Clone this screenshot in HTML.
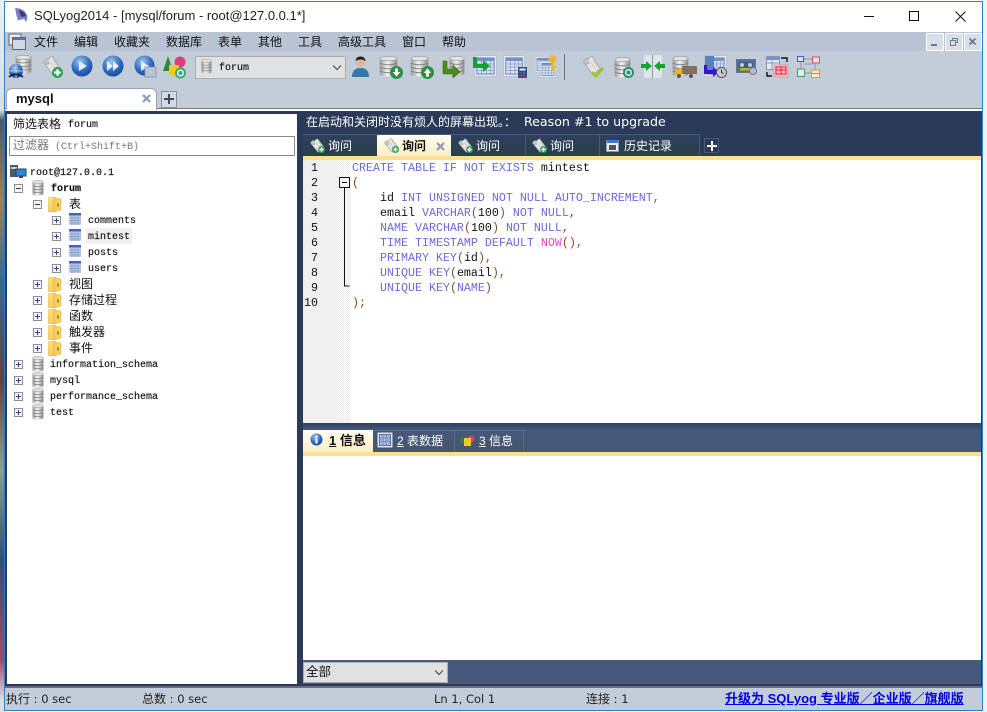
<!DOCTYPE html>
<html><head><meta charset="utf-8"><style>
html,body{margin:0;padding:0;background:#fff}
body{width:987px;height:712px;position:relative;overflow:hidden;font-family:"Liberation Sans","WenQuanYi Zen Hei","Noto Sans CJK SC",sans-serif;font-size:12px;color:#111}
.a{position:absolute}
.t{position:absolute;white-space:pre;line-height:16px}
.m{font-family:"Liberation Mono","WenQuanYi Zen Hei","Noto Sans CJK SC",monospace;font-size:10px;margin-top:2px;-webkit-text-stroke:.15px #111}
.d{font-family:"DejaVu Sans",sans-serif;font-size:11.5px;color:#222}
.c{font-family:"WenQuanYi Zen Hei","Noto Sans CJK SC",sans-serif;font-size:12px}
svg{position:absolute;overflow:visible}
.code{font-family:"Liberation Mono",monospace;font-size:11.67px;line-height:15px;white-space:pre;position:absolute}
.k{color:#6a6ad8}.p{color:#8a4a20}.f{color:#f040c0}
.ln{position:absolute;left:304px;width:14px;text-align:right;font-family:"Liberation Mono",monospace;font-size:11.67px;line-height:15px}
</style></head><body>
<svg width="0" height="0" style="position:absolute"><defs>
<linearGradient id="gdb" x1="0" x2="1" y1="0" y2="0"><stop offset="0" stop-color="#9a9a9a"/><stop offset=".45" stop-color="#f4f4f4"/><stop offset="1" stop-color="#8a8a8a"/></linearGradient>
<radialGradient id="gbl" cx=".4" cy=".3" r=".8"><stop offset="0" stop-color="#9fc6ee"/><stop offset=".55" stop-color="#2f6cc0"/><stop offset="1" stop-color="#12408e"/></radialGradient>
<linearGradient id="gf" x1="0" x2="1" y1="0" y2="1"><stop offset="0" stop-color="#ffe98a"/><stop offset="1" stop-color="#efbe4a"/></linearGradient>
<symbol id="db" viewBox="0 0 12 16" preserveAspectRatio="none" overflow="visible"><rect x="0.5" y="2" width="11" height="12" fill="url(#gdb)"/><ellipse cx="6" cy="14" rx="5.500" ry="1.600" fill="url(#gdb)"/><ellipse cx="6" cy="2" rx="5.500" ry="1.700" fill="#e2e2e2" stroke="#999" stroke-width=".5"/><path d="M.5 5.500q5.500 2.500 11 0M.5 8.500q5.500 2.500 11 0M.5 11.500q5.500 2.500 11 0" stroke="#808080" fill="none" stroke-width=".7"/></symbol>
<symbol id="fo" viewBox="0 0 14 16" preserveAspectRatio="none"><path d="M0 2l6-1 2 1 1 13-7 1H0z" fill="url(#gf)" stroke="#d8ac48" stroke-width=".5"/><path d="M6 2l7 1v11l-7 2z" fill="#f9cf5c" stroke="#d8ac48" stroke-width=".5"/><path d="M9 7l2 1v3l-2-1z" fill="#a88a28"/></symbol>
<symbol id="tb" viewBox="0 0 12 12"><rect width="12" height="12" fill="#c5d3ea"/><rect width="12" height="2.500" fill="#3f66ae"/><path d="M0 5h12M0 7.500h12M0 10h12M3 2v10M6 2v10M9 2v10" stroke="#7d97c8" stroke-width=".8"/></symbol>
<symbol id="scr" viewBox="0 0 20 22" preserveAspectRatio="none"><path d="M1 8L10 1l9 13-8 7z" fill="#e6e6e3" stroke="#9a9a9a" stroke-width=".8"/><path d="M1 8c-1-3 3-5 5-4-1 2 0 4 1 5-3 1-5 1-6-1z" fill="#c4c4c4" stroke="#999" stroke-width=".6"/><path d="M8 7l6 8M11 5l5 8" stroke="#c0c0c0" stroke-width=".8"/></symbol>
<symbol id="bx" viewBox="0 0 9 9"><rect x=".5" y=".5" width="8" height="8" fill="#f4f4f4" stroke="#8d8d8d"/><path d="M2 4.500h5M4.500 2v5" stroke="#2c4a94" stroke-width="1"/></symbol>
<symbol id="mx" viewBox="0 0 9 9"><rect x=".5" y=".5" width="8" height="8" fill="#f4f4f4" stroke="#8d8d8d"/><path d="M2 4.500h5" stroke="#333" stroke-width="1"/></symbol>
<symbol id="gp" viewBox="0 0 10 10"><circle cx="5" cy="5" r="5" fill="#2fa05a"/><path d="M5 2v6M2 5h6" stroke="#fff" stroke-width="2"/></symbol>
<symbol id="grid" viewBox="0 0 24 22" preserveAspectRatio="none"><rect x=".5" y=".5" width="23" height="21" fill="#e6ebf3" stroke="#b8c2d0"/><rect x="3" y="3" width="18" height="16" fill="#dbe4f2" stroke="#5b7db5"/><rect x="3" y="3" width="18" height="3" fill="#6f92c8"/><path d="M3 9h18M3 12h18M3 15.500h18M8 3v16M13 3v16M17 3v16" stroke="#7d97c8" stroke-width=".8"/></symbol>
</defs></svg>

<!-- desktop edges -->
<div class="a" style="left:0;top:0;width:5px;height:712px;background:linear-gradient(#eee 0,#ddd 110px,#4a5a6a 120px,#a08050 200px,#3a6a8a 280px,#604040 380px,#8aa090 470px,#30506a 560px,#a04a70 660px,#ddd 700px)"></div>
<div class="a" style="left:983px;top:0;width:4px;height:712px;background:#f2f2f2"></div>
<!-- window -->
<div class="a" style="left:4px;top:1px;width:979px;height:710px;background:#fff;border:1px solid #2a80c8;box-sizing:border-box"></div>

<!-- title -->
<svg style="left:14px;top:7px" width="16" height="16" viewBox="0 0 16 16"><path d="M1 1c5 0 10 2 12 7 1 3 0 5-1 7l-2-3-5 1-1 1-1-4C2 8 2 4 1 1z" fill="#7f7fc8"/><path d="M5 3c4 1 6 3 7 6l-4 1C6 8 5 5 5 3z" fill="#3a3a78"/></svg>
<div class="t" style="left:34px;top:8px;font-size:13px;color:#222">SQLyog2014 - [mysql/forum - root@127.0.0.1*]</div>
<div class="a" style="left:864px;top:16px;width:10px;height:1px;background:#111"></div>
<div class="a" style="left:909px;top:11px;width:8px;height:8px;border:1px solid #111"></div>
<svg style="left:955px;top:11px" width="11" height="11"><path d="M.5.5l10 10M10.500.5l-10 10" stroke="#111" fill="none"/></svg>

<!-- menu -->
<div class="a" style="left:5px;top:32px;width:977px;height:19px;background:#b8c3d3"></div>
<svg style="left:9px;top:34px" width="17" height="16"><rect x="0" y="0" width="12" height="11" fill="#e8ecf2" stroke="#667"/><rect x="3.500" y="3.500" width="13" height="12" fill="#cfd8e6" stroke="#667"/><rect x="4" y="4" width="12" height="2" fill="#5577aa"/></svg>
<div class="t" style="left:34px;top:34px">文件</div>
<div class="t" style="left:74px;top:34px">编辑</div>
<div class="t" style="left:114px;top:34px">收藏夹</div>
<div class="t" style="left:166px;top:34px">数据库</div>
<div class="t" style="left:218px;top:34px">表单</div>
<div class="t" style="left:258px;top:34px">其他</div>
<div class="t" style="left:298px;top:34px">工具</div>
<div class="t" style="left:338px;top:34px">高级工具</div>
<div class="t" style="left:402px;top:34px">窗口</div>
<div class="t" style="left:442px;top:34px">帮助</div>
<div class="a" style="left:926px;top:33px;width:16px;height:16px;background:#d8dfe8;border:1px solid #fff"></div>
<div class="a" style="left:945px;top:33px;width:16px;height:16px;background:#d8dfe8;border:1px solid #fff"></div>
<div class="a" style="left:964px;top:33px;width:16px;height:16px;background:#d8dfe8;border:1px solid #fff"></div>
<div class="a" style="left:931px;top:44px;width:6px;height:2px;background:#6a7a90"></div>
<svg style="left:950px;top:38px" width="8" height="8"><path d="M2.500 2.500v-2h5v4h-2M.5 2.500h5v5h-5z" fill="none" stroke="#6a7a90"/></svg>
<svg style="left:969px;top:38px" width="7" height="7"><path d="M.5.5l6 6M6.500.5l-6 6" stroke="#6a7a90" stroke-width="1.800"/></svg>

<!-- toolbar -->
<div class="a" style="left:5px;top:51px;width:977px;height:57px;background:#c3cdd9"></div>
<!-- 1 connect -->
<svg style="left:15px;top:55px;width:17px;height:19px"><use href="#db" width="17" height="19"/></svg>
<svg style="left:8px;top:63px" width="16" height="16"><circle cx="8" cy="8" r="7" fill="url(#gbl)"/><path d="M8 1v14M1 8h14" stroke="#cfe0f5" stroke-width=".8"/><path d="M1 14c3-3 9-4 14 0" stroke="#111" stroke-width="1.500" fill="none"/></svg>
<!-- 2 -->
<svg style="left:43px;top:55px;width:18px;height:21px"><use href="#scr" width="18" height="21"/></svg>
<svg style="left:52px;top:67px;width:11px;height:11px"><use href="#gp" width="11" height="11"/></svg>
<!-- 3,4,5 -->
<svg style="left:71px;top:55px" width="22" height="22"><circle cx="11" cy="11" r="10.500" fill="url(#gbl)"/><path d="M8 6l8 5-8 5z" fill="#e6eefa"/></svg>
<svg style="left:102px;top:55px" width="22" height="22"><circle cx="11" cy="11" r="10.500" fill="url(#gbl)"/><path d="M5 6l6 5-6 5zM11 6l6 5-6 5z" fill="#e6eefa"/></svg>
<svg style="left:134px;top:55px" width="22" height="22"><circle cx="10.500" cy="10.500" r="10" fill="url(#gbl)"/><path d="M7 6l8 5-8 5z" fill="#e6eefa"/><rect x="11" y="12" width="11" height="10" fill="#b8c4d8" stroke="#8494ae" stroke-width=".8"/></svg>
<!-- 6 -->
<svg style="left:163px;top:56px" width="24" height="23"><path d="M0 15l5-15 5 15z" fill="#2c8a3a"/><circle cx="17" cy="6" r="5.500" fill="#d8407a"/><rect x="6" y="9" width="10" height="10" fill="#f0cc20"/><circle cx="17.500" cy="17" r="5.500" fill="#3aa878"/><circle cx="17.500" cy="17" r="2.800" fill="none" stroke="#fff" stroke-width="1.300"/></svg>
<!-- combo -->
<div class="a" style="left:195px;top:56px;width:149px;height:21px;background:#e1e1e1;border:1px solid #adadad"></div>
<svg style="left:201px;top:59px;width:11px;height:15px"><use href="#db" width="11" height="15"/></svg>
<div class="t m" style="left:219px;top:59px">forum</div>
<svg style="left:332px;top:65px" width="10" height="6"><path d="M1 .5l4 4 4-4" stroke="#444" fill="none" stroke-width="1.100"/></svg>
<!-- 7 person -->
<svg style="left:352px;top:56px" width="17" height="22"><circle cx="8.500" cy="6" r="5" fill="#d9b89c"/><path d="M3.500 5c0-6 10-6 10 0-3-2-7-2-10 0z" fill="#222"/><path d="M0 21c0-7 4-9 8.500-9s8.500 2 8.500 9z" fill="#3478a8"/></svg>
<!-- 8 -->
<svg style="left:379px;top:56px;width:19px;height:21px"><use href="#db" width="19" height="21"/></svg>
<svg style="left:390px;top:66px" width="13" height="13" viewBox="0 0 14 14"><circle cx="7" cy="7" r="7" fill="#2f8d46"/><path d="M5.500 2.500h3v4h2.500L7 11.500 3 6.500h2.500z" fill="#fff"/></svg>
<!-- 9 -->
<svg style="left:410px;top:56px;width:19px;height:21px"><use href="#db" width="19" height="21"/></svg>
<svg style="left:421px;top:66px" width="13" height="13" viewBox="0 0 14 14"><circle cx="7" cy="7" r="7" fill="#2f8d46"/><path d="M5.500 11.500h3v-4h2.500L7 2.500 3 7.500h2.500z" fill="#fff"/></svg>
<!-- 10 -->
<svg style="left:449px;top:56px;width:16px;height:20px"><use href="#db" width="16" height="20"/></svg>
<svg style="left:441px;top:60px" width="20" height="19"><path d="M2 1h4v8h6V5l7 7-7 6v-4H2z" fill="#4f8a20" stroke="#3a6a16" stroke-width=".6"/></svg>
<!-- 11 -->
<svg style="left:474px;top:55px;width:23px;height:22px"><use href="#grid" width="23" height="22"/></svg>
<svg style="left:472px;top:57px" width="20" height="17"><path d="M1 0h4v7h6V3l7 6-7 6v-4H1z" fill="#14a02c"/></svg>
<!-- 12 -->
<svg style="left:503px;top:55px;width:22px;height:22px"><use href="#grid" width="22" height="22"/></svg>
<svg style="left:518px;top:67px" width="9" height="11"><rect width="9" height="11" fill="#2f4f90"/><rect x="1.500" y="1.500" width="6" height="2" fill="#cfe"/><path d="M2 6h1M5 6h2M2 9h1M5 9h2" stroke="#e04050" stroke-width="1.200"/></svg>
<!-- 13 -->
<svg style="left:535px;top:56px;width:16px;height:17px"><use href="#grid" width="16" height="17"/></svg>
<svg style="left:540px;top:61px;width:16px;height:17px"><use href="#grid" width="16" height="17"/></svg>
<svg style="left:547px;top:55px" width="11" height="17"><circle cx="5.500" cy="4" r="4" fill="#eab838"/><rect x="4" y="6" width="3.500" height="10" fill="#eab838"/><rect x="7" y="11" width="2.500" height="2" fill="#eab838"/></svg>
<div class="a" style="left:564px;top:54px;width:1px;height:26px;background:#6a6f78"></div>
<!-- 14 -->
<svg style="left:583px;top:55px;width:18px;height:21px"><use href="#scr" width="18" height="21"/></svg>
<svg style="left:591px;top:66px" width="13" height="12"><path d="M1 6l4 4 7-8" stroke="#9ac828" stroke-width="3" fill="none"/></svg>
<!-- 15 -->
<svg style="left:614px;top:57px;width:17px;height:21px"><use href="#db" width="17" height="21"/></svg>
<svg style="left:623px;top:67px" width="11" height="11"><circle cx="5.500" cy="5.500" r="5.500" fill="#2a9070"/><circle cx="5.500" cy="5.500" r="2.800" fill="none" stroke="#e8f4f0" stroke-width="1.300"/></svg>
<!-- 16 -->
<div class="a" style="left:644px;top:55px;width:18px;height:23px;background:#dfe5ea"></div>
<div class="a" style="left:652px;top:55px;width:1px;height:23px;background:#8a97a6"></div>
<svg style="left:641px;top:60px" width="24" height="12"><path d="M0 4h5V1l6 5-6 5V8H0zM24 4h-5V1l-6 5 6 5V8h5z" fill="#10a828"/></svg>
<!-- 17 -->
<svg style="left:672px;top:56px;width:17px;height:21px"><use href="#db" width="17" height="21"/></svg>
<svg style="left:675px;top:66px" width="22" height="12"><rect x="7" y="0" width="15" height="8" fill="#84705c"/><path d="M0 3h7v6H0z" fill="#e6b820"/><circle cx="4" cy="10" r="2" fill="#555"/><circle cx="16" cy="10" r="2" fill="#555"/></svg>
<!-- 18 -->
<svg style="left:704px;top:55px;width:23px;height:22px"><use href="#grid" width="23" height="22"/></svg>
<div class="a" style="left:705px;top:56px;width:9px;height:14px;background:#5a80c0"></div>
<svg style="left:703px;top:65px" width="16" height="12"><path d="M1 0h3v5h6V2l6 5-6 5V9H1z" fill="#3a10d8"/></svg>
<svg style="left:716px;top:67px" width="11" height="11"><circle cx="5.500" cy="5.500" r="5" fill="#c8ccd2" stroke="#555"/><path d="M5.500 2.500v3l2 1" stroke="#333" fill="none"/></svg>
<!-- 19 -->
<svg style="left:736px;top:59px" width="21" height="16"><rect x=".5" y=".5" width="19" height="13" fill="#50709e" stroke="#68758a"/><rect x="3" y="3" width="14" height="6" fill="#3a5a90"/><circle cx="6" cy="6" r="2" fill="#c8ccd2"/><circle cx="14" cy="6" r="2" fill="#c8ccd2"/><rect x="4" y="9" width="11" height="2.500" fill="#d4a820"/><circle cx="17" cy="12" r="3.500" fill="#bbc" stroke="#778"/></svg>
<!-- 20 -->
<svg style="left:766px;top:56px" width="23" height="22"><rect x=".5" y=".5" width="13" height="13" fill="#e8edf5" stroke="#7d97c8"/><rect x="1" y="1" width="12" height="3" fill="#6f92c8"/><path d="M1 7h12M6 1v12" stroke="#7d97c8"/><path d="M15 2h6v4M1 16v4h5" stroke="#111" fill="none" stroke-width="1.400"/><rect x="8" y="9" width="14" height="12" fill="#f4c0c4" stroke="#d8a0a4"/><path d="M10 11h10v7H10zM15 11v7M10 14h10" stroke="#f01830" fill="none" stroke-width="1"/></svg>
<!-- 21 -->
<svg style="left:797px;top:56px" width="23" height="22"><rect x=".5" y=".5" width="6" height="5" fill="#dfe4f4" stroke="#4a50d0"/><rect x="15.500" y="1" width="7" height="6" fill="#f0dcdc" stroke="#d05060"/><rect x=".5" y="13" width="7" height="7.500" fill="#dff0e4" stroke="#40a060"/><rect x="14.500" y="14" width="8" height="7.500" fill="#f8ecd0" stroke="#e09830"/><path d="M14.500 17.500h8M7 3h8M4 6v7M18 7v7M7 17h7M7 8h8" stroke="#8a96a4" fill="none"/></svg>

<!-- tab strip -->
<div class="a" style="left:6px;top:88px;width:149px;height:21px;background:#fff;border:1px solid #9aa4b2;border-bottom:0;border-radius:6px 6px 0 0;z-index:2"></div>
<div class="t" style="left:16px;top:91px;font-weight:bold;font-size:13px;z-index:3">mysql</div>
<svg style="left:142px;top:94px;z-index:3" width="9" height="9"><path d="M1 1l7 7M8 1L1 8" stroke="#8a9bb4" stroke-width="2.200"/></svg>
<div class="a" style="left:161px;top:91px;width:14px;height:15px;background:#d4dae4;border:1px solid #8a8f98"></div>
<svg style="left:164px;top:94px" width="10" height="10"><path d="M5 0v10M0 5h10" stroke="#3a4a60" stroke-width="2"/></svg>
<div class="a" style="left:5px;top:108px;width:977px;height:1px;background:#77787c"></div>
<div class="a" style="left:5px;top:109px;width:977px;height:2px;background:#fff"></div>

<!-- main dark area -->
<div class="a" style="left:5px;top:111px;width:977px;height:575px;background:#2a3a58"></div>

<!-- left panel -->
<div class="a" style="left:7px;top:114px;width:290px;height:570px;background:#fff"></div>
<div class="t" style="left:13px;top:116px">筛选表格</div>
<div class="t m" style="left:68px;top:116px">forum</div>
<div class="a" style="left:9px;top:136px;width:284px;height:18px;border:1px solid #8a8a8a;background:#fff"></div>
<div class="t" style="left:13px;top:137px;color:#777">过滤器<span style="font-family:'Liberation Mono',monospace;font-size:10px"> (Ctrl+Shift+B)</span></div>

<svg style="left:10px;top:165px" width="17" height="14"><rect x="0" y="0" width="8" height="12" fill="#4a5a6a"/><rect x="1" y="2" width="6" height="2" fill="#c8d0d8"/><rect x="6" y="4" width="10" height="7" fill="#2a8ad8" stroke="#345"/><rect x="9" y="11" width="4" height="2" fill="#345"/></svg>
<div class="t m" style="left:30px;top:164px">root@127.0.0.1</div>

<svg style="left:14px;top:184px;width:9px;height:9px"><use href="#mx" width="9" height="9"/></svg>
<svg style="left:32px;top:180px;width:12px;height:16px"><use href="#db" width="12" height="16"/></svg>
<div class="t m" style="left:51px;top:180px;font-weight:bold">forum</div>

<svg style="left:33px;top:200px;width:9px;height:9px"><use href="#mx" width="9" height="9"/></svg>
<svg style="left:48px;top:196px;width:14px;height:16px"><use href="#fo" width="14" height="16"/></svg>
<div class="t" style="left:69px;top:196px">表</div>

<svg style="left:52px;top:216px;width:9px;height:9px"><use href="#bx" width="9" height="9"/></svg>
<svg style="left:69px;top:213px;width:12px;height:12px"><use href="#tb" width="12" height="12"/></svg>
<div class="t m" style="left:88px;top:212px">comments</div>

<div class="a" style="left:86px;top:228px;width:46px;height:16px;background:#f0f0f0"></div>
<svg style="left:52px;top:232px;width:9px;height:9px"><use href="#bx" width="9" height="9"/></svg>
<svg style="left:69px;top:229px;width:12px;height:12px"><use href="#tb" width="12" height="12"/></svg>
<div class="t m" style="left:88px;top:228px">mintest</div>

<svg style="left:52px;top:248px;width:9px;height:9px"><use href="#bx" width="9" height="9"/></svg>
<svg style="left:69px;top:245px;width:12px;height:12px"><use href="#tb" width="12" height="12"/></svg>
<div class="t m" style="left:88px;top:244px">posts</div>

<svg style="left:52px;top:264px;width:9px;height:9px"><use href="#bx" width="9" height="9"/></svg>
<svg style="left:69px;top:261px;width:12px;height:12px"><use href="#tb" width="12" height="12"/></svg>
<div class="t m" style="left:88px;top:260px">users</div>

<svg style="left:33px;top:280px;width:9px;height:9px"><use href="#bx" width="9" height="9"/></svg>
<svg style="left:48px;top:276px;width:14px;height:16px"><use href="#fo" width="14" height="16"/></svg>
<div class="t" style="left:69px;top:276px">视图</div>

<svg style="left:33px;top:296px;width:9px;height:9px"><use href="#bx" width="9" height="9"/></svg>
<svg style="left:48px;top:292px;width:14px;height:16px"><use href="#fo" width="14" height="16"/></svg>
<div class="t" style="left:69px;top:292px">存储过程</div>

<svg style="left:33px;top:312px;width:9px;height:9px"><use href="#bx" width="9" height="9"/></svg>
<svg style="left:48px;top:308px;width:14px;height:16px"><use href="#fo" width="14" height="16"/></svg>
<div class="t" style="left:69px;top:308px">函数</div>

<svg style="left:33px;top:328px;width:9px;height:9px"><use href="#bx" width="9" height="9"/></svg>
<svg style="left:48px;top:324px;width:14px;height:16px"><use href="#fo" width="14" height="16"/></svg>
<div class="t" style="left:69px;top:324px">触发器</div>

<svg style="left:33px;top:344px;width:9px;height:9px"><use href="#bx" width="9" height="9"/></svg>
<svg style="left:48px;top:340px;width:14px;height:16px"><use href="#fo" width="14" height="16"/></svg>
<div class="t" style="left:69px;top:340px">事件</div>

<svg style="left:14px;top:360px;width:9px;height:9px"><use href="#bx" width="9" height="9"/></svg>
<svg style="left:32px;top:356px;width:12px;height:16px"><use href="#db" width="12" height="16"/></svg>
<div class="t m" style="left:50px;top:356px">information_schema</div>

<svg style="left:14px;top:376px;width:9px;height:9px"><use href="#bx" width="9" height="9"/></svg>
<svg style="left:32px;top:372px;width:12px;height:16px"><use href="#db" width="12" height="16"/></svg>
<div class="t m" style="left:50px;top:372px">mysql</div>

<svg style="left:14px;top:392px;width:9px;height:9px"><use href="#bx" width="9" height="9"/></svg>
<svg style="left:32px;top:388px;width:12px;height:16px"><use href="#db" width="12" height="16"/></svg>
<div class="t m" style="left:50px;top:388px">performance_schema</div>

<svg style="left:14px;top:408px;width:9px;height:9px"><use href="#bx" width="9" height="9"/></svg>
<svg style="left:32px;top:404px;width:12px;height:16px"><use href="#db" width="12" height="16"/></svg>
<div class="t m" style="left:50px;top:404px">test</div>

<!-- notice -->
<div class="t c" style="left:306px;top:114px;color:#fff">在启动和关闭时没有烦人的屏幕出现。：</div>
<div class="t" style="left:524px;top:114px;color:#fff;font-family:'DejaVu Sans',sans-serif;font-size:12.600px">Reason #1 to upgrade</div>

<!-- query tabs -->
<div class="a" style="left:303px;top:134px;width:397px;height:22px;background:linear-gradient(#2e4060,#2a3f4a)"></div>
<div class="a" style="left:377px;top:134px;width:74px;height:22px;background:linear-gradient(#fffdf4,#fdeec4)"></div>
<div class="a" style="left:525px;top:134px;width:1px;height:22px;background:#4a5a74"></div>
<div class="a" style="left:599px;top:134px;width:1px;height:22px;background:#4a5a74"></div>
<div class="a" style="left:699px;top:134px;width:1px;height:22px;background:#4a5a74"></div>
<div class="a" style="left:303px;top:134px;width:397px;height:1px;background:#4a5a74"></div>

<svg style="left:310px;top:138px;width:15px;height:15px"><use href="#scr" width="15" height="15"/></svg><svg style="left:318px;top:146px;width:7px;height:7px"><use href="#gp" width="7" height="7"/></svg>
<div class="t" style="left:328px;top:138px;color:#fff">询问</div>
<svg style="left:384px;top:138px;width:15px;height:15px"><use href="#scr" width="15" height="15"/></svg><svg style="left:392px;top:146px;width:7px;height:7px"><use href="#gp" width="7" height="7"/></svg>
<div class="t" style="left:402px;top:138px;font-weight:bold;color:#111">询问</div>
<svg style="left:436px;top:142px" width="9" height="9"><path d="M1 1l7 7M8 1L1 8" stroke="#8a9bb4" stroke-width="2.200"/></svg>
<svg style="left:458px;top:138px;width:15px;height:15px"><use href="#scr" width="15" height="15"/></svg><svg style="left:466px;top:146px;width:7px;height:7px"><use href="#gp" width="7" height="7"/></svg>
<div class="t" style="left:476px;top:138px;color:#fff">询问</div>
<svg style="left:532px;top:138px;width:15px;height:15px"><use href="#scr" width="15" height="15"/></svg><svg style="left:540px;top:146px;width:7px;height:7px"><use href="#gp" width="7" height="7"/></svg>
<div class="t" style="left:550px;top:138px;color:#fff">询问</div>
<svg style="left:606px;top:139px" width="13" height="13"><rect x=".5" y="1.500" width="12" height="11" fill="#f0f0f0" stroke="#8a97a8"/><rect x="1" y="1" width="11" height="3" fill="#3a78d0"/><rect x="3" y="6" width="7" height="5" fill="#555"/></svg>
<div class="t" style="left:624px;top:138px;color:#fff">历史记录</div>
<div class="a" style="left:704px;top:138px;width:15px;height:15px;border:1px solid #4a5a74;box-sizing:border-box"></div>
<svg style="left:707px;top:141px" width="10" height="10"><path d="M5 0v10M0 5h10" stroke="#fff" stroke-width="2"/></svg>

<div class="a" style="left:303px;top:156px;width:678px;height:4px;background:#fbdf94"></div>

<!-- editor -->
<div class="a" style="left:303px;top:160px;width:678px;height:263px;background:#fff"></div>
<div class="a" style="left:303px;top:160px;width:34px;height:263px;background:#f0f0f0"></div>
<div class="a" style="left:337px;top:160px;width:14px;height:263px;background:repeating-conic-gradient(#e8e8e8 0 25%,#fff 0 50%) 0 0/2px 2px"></div>
<div class="ln" style="top:161px">1</div>
<div class="ln" style="top:176px">2</div>
<div class="ln" style="top:191px">3</div>
<div class="ln" style="top:206px">4</div>
<div class="ln" style="top:221px">5</div>
<div class="ln" style="top:236px">6</div>
<div class="ln" style="top:251px">7</div>
<div class="ln" style="top:266px">8</div>
<div class="ln" style="top:281px">9</div>
<div class="ln" style="top:296px">10</div>
<svg style="left:339px;top:177px" width="12" height="112"><rect x=".5" y=".5" width="10" height="10" fill="#f6f6f6" stroke="#111"/><path d="M3 5.500h5" stroke="#111"/><path d="M5.500 10.500v98.500h5" stroke="#111" fill="none"/></svg>
<div class="code" style="left:352px;top:161px"><span class="k">CREATE TABLE IF NOT EXISTS</span> mintest
<span class="p">(</span>
    id <span class="k">INT UNSIGNED NOT NULL AUTO_INCREMENT</span><span class="p">,</span>
    email <span class="k">VARCHAR</span><span class="p">(</span>100<span class="p">)</span> <span class="k">NOT NULL</span><span class="p">,</span>
    <span class="k">NAME VARCHAR</span><span class="p">(</span>100<span class="p">)</span> <span class="k">NOT NULL</span><span class="p">,</span>
    <span class="k">TIME TIMESTAMP DEFAULT</span> <span class="f">NOW</span><span class="p">(),</span>
    <span class="k">PRIMARY KEY</span><span class="p">(</span>id<span class="p">),</span>
    <span class="k">UNIQUE KEY</span><span class="p">(</span>email<span class="p">),</span>
    <span class="k">UNIQUE KEY</span><span class="p">(</span><span class="k">NAME</span><span class="p">)</span>
<span class="p">);</span></div>

<!-- lower panel -->
<div class="a" style="left:303px;top:423px;width:678px;height:261px;background:#46597b"></div>
<div class="a" style="left:303px;top:423px;width:678px;height:7px;background:linear-gradient(#2e4060,#46597b)"></div>
<div class="a" style="left:303px;top:430px;width:70px;height:22px;background:linear-gradient(#fffdf4,#fdeec4)"></div>
<div class="a" style="left:373px;top:430px;width:154px;height:22px;background:linear-gradient(#46597b,#43566a);border-top:1px solid #5a6c8a;box-sizing:border-box"></div>
<div class="a" style="left:454px;top:430px;width:1px;height:22px;background:#5a6c8a"></div>
<div class="a" style="left:523px;top:430px;width:1px;height:22px;background:#5a6c8a"></div>
<svg style="left:310px;top:433px" width="13" height="13"><circle cx="6.500" cy="6.500" r="6" fill="url(#gbl)"/><rect x="5.500" y="5.500" width="2" height="5" fill="#fff"/><rect x="5.500" y="2.500" width="2" height="2" fill="#fff"/></svg>
<div class="t" style="left:329px;top:433px;font-weight:bold;color:#111;font-size:13px"><u>1</u> 信息</div>
<svg style="left:378px;top:433px;width:14px;height:14px"><rect width="14" height="14" fill="#eef" stroke="#dde"/><rect x="1.500" y="1.500" width="11" height="11" fill="#a8b8dc" stroke="#5070a8"/><path d="M1.500 5h11M1.500 8.500h11M5 1.500v11M8.500 1.500v11" stroke="#7a90c0"/></svg>
<div class="t" style="left:397px;top:433px;color:#fff"><u>2</u> 表数据</div>
<svg style="left:460px;top:435px" width="15" height="11"><path d="M0 8l2-7 2 7z" fill="#2c8a3a"/><circle cx="11" cy="4" r="3.500" fill="#d8407a"/><rect x="4" y="3" width="7" height="8" fill="#f0cc20"/></svg>
<div class="t" style="left:479px;top:433px;color:#fff"><u>3</u> 信息</div>
<div class="a" style="left:303px;top:452px;width:678px;height:4px;background:#fbdf94"></div>
<div class="a" style="left:303px;top:456px;width:678px;height:204px;background:#fff"></div>
<div class="a" style="left:303px;top:662px;width:143px;height:19px;background:#e1e1e1;border:1px solid #adadad"></div>
<div class="t" style="left:306px;top:664px;font-size:12.500px">全部</div>
<svg style="left:434px;top:670px" width="10" height="6"><path d="M1 .5l4 4 4-4" stroke="#444" fill="none" stroke-width="1.100"/></svg>

<!-- status -->
<div class="a" style="left:5px;top:686px;width:977px;height:2px;background:#6a6f78"></div>
<div class="a" style="left:5px;top:688px;width:977px;height:22px;background:#c3cdd9"></div>
<div class="t d" style="left:6px;top:691px"><span class="c">执行</span> : 0 sec</div>
<div class="t d" style="left:142px;top:691px"><span class="c">总数</span> : 0 sec</div>
<div class="t d" style="left:434px;top:691px">Ln 1, Col 1</div>
<div class="t d" style="left:586px;top:691px"><span class="c">连接</span> : 1</div>
<div class="t" style="left:725px;top:691px;color:#0000e0;font-weight:bold;font-size:13px;text-decoration:underline">升级为 SQLyog 专业版／企业版／旗舰版</div>
</body></html>
